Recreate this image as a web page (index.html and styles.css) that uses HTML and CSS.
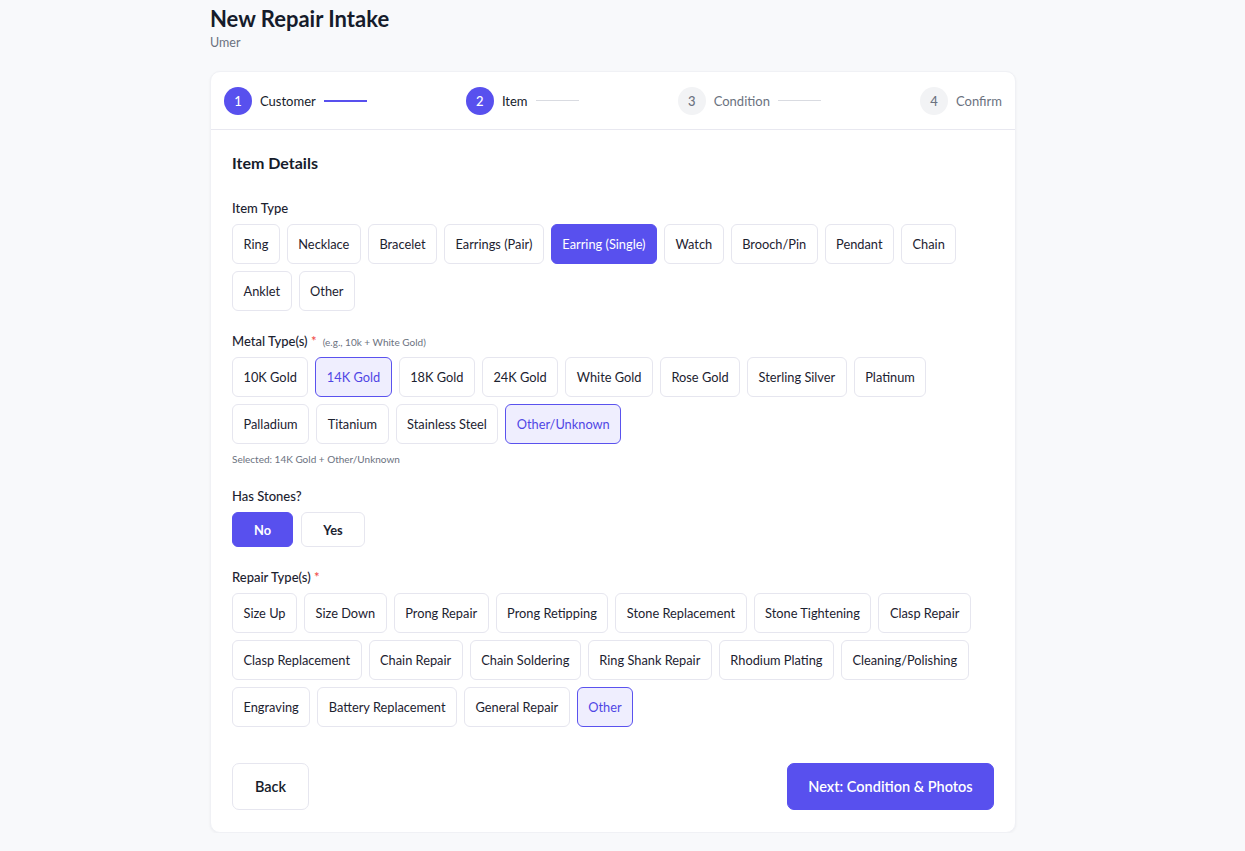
FILE: index.html
```html
<!DOCTYPE html>
<html lang="en">
<head>
<meta charset="UTF-8" />
<meta name="viewport" content="width=device-width, initial-scale=1.0" />
<title>New Repair Intake</title>
<link rel="stylesheet" href="styles.css">
</head>
<body>
<div class="page">
  <h1 class="title">New Repair Intake</h1>
  <div class="subtitle">Umer</div>

  <div class="card">
    <div class="stepper">
      <div class="step done">
        <span class="num">1</span><span class="label">Customer</span><span class="line"></span>
      </div>
      <div class="step active">
        <span class="num">2</span><span class="label">Item</span><span class="line"></span>
      </div>
      <div class="step">
        <span class="num">3</span><span class="label">Condition</span><span class="line"></span>
      </div>
      <div class="step">
        <span class="num">4</span><span class="label">Confirm</span>
      </div>
    </div>

    <div class="body">
      <h2 class="section-title">Item Details</h2>

      <div class="field">
        <div class="field-label">Item Type</div>
        <div class="options">
          <button class="opt">Ring</button>
          <button class="opt">Necklace</button>
          <button class="opt">Bracelet</button>
          <button class="opt">Earrings (Pair)</button>
          <button class="opt solid">Earring (Single)</button>
          <button class="opt">Watch</button>
          <button class="opt">Brooch/Pin</button>
          <button class="opt">Pendant</button>
          <button class="opt">Chain</button>
          <button class="opt">Anklet</button>
          <button class="opt">Other</button>
        </div>
      </div>

      <div class="field">
        <div class="field-label">Metal Type(s) <span class="req">*</span> <span class="hint">(e.g., 10k + White Gold)</span></div>
        <div class="options">
          <button class="opt">10K Gold</button>
          <button class="opt picked">14K Gold</button>
          <button class="opt">18K Gold</button>
          <button class="opt">24K Gold</button>
          <button class="opt">White Gold</button>
          <button class="opt">Rose Gold</button>
          <button class="opt">Sterling Silver</button>
          <button class="opt">Platinum</button>
          <button class="opt">Palladium</button>
          <button class="opt">Titanium</button>
          <button class="opt">Stainless Steel</button>
          <button class="opt picked">Other/Unknown</button>
        </div>
        <div class="selected-note">Selected: 14K Gold + Other/Unknown</div>
      </div>

      <div class="field">
        <div class="field-label">Has Stones?</div>
        <div class="options yesno">
          <button class="opt toggle solid">No</button>
          <button class="opt toggle">Yes</button>
        </div>
      </div>

      <div class="field">
        <div class="field-label">Repair Type(s) <span class="req">*</span></div>
        <div class="options">
          <button class="opt">Size Up</button>
          <button class="opt">Size Down</button>
          <button class="opt">Prong Repair</button>
          <button class="opt">Prong Retipping</button>
          <button class="opt">Stone Replacement</button>
          <button class="opt">Stone Tightening</button>
          <button class="opt">Clasp Repair</button>
          <button class="opt">Clasp Replacement</button>
          <button class="opt">Chain Repair</button>
          <button class="opt">Chain Soldering</button>
          <button class="opt">Ring Shank Repair</button>
          <button class="opt">Rhodium Plating</button>
          <button class="opt">Cleaning/Polishing</button>
          <button class="opt">Engraving</button>
          <button class="opt">Battery Replacement</button>
          <button class="opt">General Repair</button>
          <button class="opt picked">Other</button>
        </div>
      </div>

      <div class="actions">
        <button class="btn back">Back</button>
        <button class="btn next">Next: Condition &amp; Photos</button>
      </div>
    </div>
  </div>
</div>
</body>
</html>
```

FILE: styles.css
```css
* {
  box-sizing: border-box;
}
body {
  margin: 0;
  background: #f8f9fb;
  font-family: Lato, "Open Sans", sans-serif;
  color: #1c2230;
}
.page {
  width: 806px;
  margin-left: 210px;
  padding-top: 6px;
}
.title {
  margin: 0;
  font-size: 22px;
  line-height: 25px;
  font-weight: 700;
  color: #161c2b;
}
.subtitle {
  margin-top: 4px;
  font-size: 12.5px;
  color: #6b7280;
}
.card {
  margin-top: 21px;
  background: #fff;
  border-radius: 10px;
  box-shadow: 0 1px 3px rgba(20, 24, 40, 0.05);
  border: 1px solid #f0f1f5;
}

/* stepper */
.stepper {
  display: flex;
  justify-content: space-between;
  align-items: center;
  height: 58px;
  padding: 0 13px;
  border-bottom: 1px solid #e8e8f0;
}
.step {
  display: flex;
  align-items: center;
  gap: 8px;
}
.num {
  width: 28px;
  height: 28px;
  border-radius: 50%;
  background: #f2f3f5;
  color: #6b7280;
  display: flex;
  align-items: center;
  justify-content: center;
  font-size: 13px;
  font-weight: 500;
}
.step .label {
  font-size: 13px;
  color: #6b7280;
}
.step .line {
  width: 43px;
  height: 1px;
  background: #d9dbe1;
}
.step.done .num,
.step.active .num {
  background: #5850ee;
  color: #fff;
}
.step.done .label,
.step.active .label {
  color: #161c2b;
}
.step.done .line {
  height: 2px;
  background: #5850ee;
}

/* form body */
.body {
  padding: 22px 21px 22px;
}
.section-title {
  margin: 0 0 26px;
  font-size: 16px;
  line-height: 22px;
  font-weight: 700;
  color: #161c2b;
}
.field {
  margin-bottom: 22px;
}
.field-label {
  font-size: 13px;
  line-height: 16px;
  font-weight: 500;
  color: #1c2230;
  margin-bottom: 8px;
}
.req {
  color: #ef4444;
}
.hint {
  font-size: 10px;
  line-height: 1;
  font-weight: 400;
  color: #6b7280;
  margin-left: 3px;
}
.options {
  display: flex;
  flex-wrap: wrap;
  gap: 7px;
}
.opt {
  height: 40px;
  padding: 0 10.5px;
  border: 1px solid #e6e6ef;
  border-radius: 6px;
  background: #fff;
  font-family: inherit;
  font-size: 12.8px;
  color: #1c2230;
  cursor: pointer;
}
.opt.solid {
  background: #5850ee;
  border-color: #5850ee;
  color: #fff;
}
.opt.picked {
  background: #efeefe;
  border-color: #5a52ee;
  color: #4f46e5;
}
.yesno {
  gap: 8px;
}
.opt.toggle {
  height: 35px;
  width: 61px;
  font-weight: 700;
}
.opt.toggle + .opt.toggle {
  width: 64px;
}
.selected-note {
  margin-top: 9px;
  font-size: 10px;
  color: #6b7280;
  margin-bottom: 23px;
}

/* footer */
.actions {
  display: flex;
  justify-content: space-between;
  margin-top: 36px;
}
.btn {
  height: 47px;
  border-radius: 7px;
  font-family: inherit;
  font-size: 14.5px;
  font-weight: 600;
  cursor: pointer;
}
.btn.back {
  width: 77px;
  background: #fff;
  border: 1px solid #e6e6ef;
  color: #161c2b;
}
.btn.next {
  width: 207px;
  background: #5850ee;
  border: 1px solid #5850ee;
  color: #fff;
}
```
